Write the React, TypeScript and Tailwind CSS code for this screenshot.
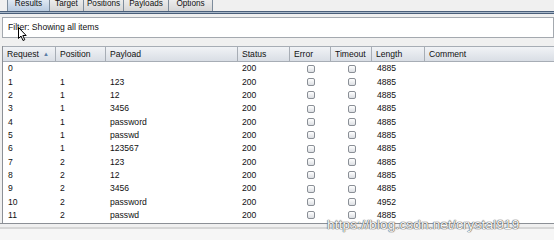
const tabs = ["Results", "Target", "Positions", "Payloads", "Options"];
const tabWidths = ["w-[43px]", "w-[35px]", "w-[41px]", "w-[46px]", "w-[45px]"];

const cols = [
  { name: "Request", w: "w-[53px]" },
  { name: "Position", w: "w-[50px]" },
  { name: "Payload", w: "w-[132px]" },
  { name: "Status", w: "w-[52px]" },
  { name: "Error", w: "w-[41px]" },
  { name: "Timeout", w: "w-[41px]" },
  { name: "Length", w: "w-[53px]" },
  { name: "Comment", w: "w-[131px]" },
];

const rows = [
  ["0", "", "", "200", "4885"],
  ["1", "1", "123", "200", "4885"],
  ["2", "1", "12", "200", "4885"],
  ["3", "1", "3456", "200", "4885"],
  ["4", "1", "password", "200", "4885"],
  ["5", "1", "passwd", "200", "4885"],
  ["6", "1", "123567", "200", "4885"],
  ["7", "2", "123", "200", "4885"],
  ["8", "2", "12", "200", "4885"],
  ["9", "2", "3456", "200", "4885"],
  ["10", "2", "password", "200", "4952"],
  ["11", "2", "passwd", "200", "4885"],
];

function Check() {
  return (
    <div className="w-[41px] flex justify-center">
      <div className="w-[8px] h-[8px] rounded-[2px] border border-[#8a8f96] bg-gradient-to-b from-[#ffffff] to-[#dcdfe3]" />
    </div>
  );
}

export default function App() {
  return (
    <div className="relative w-[554px] h-[240px] overflow-hidden bg-[#f0f0f0] text-[#111] font-['Liberation_Sans',Arial,sans-serif] text-[8.6px]">
      {/* Tabs */}
      <div className="flex h-[11px] pl-[7px] text-[8.2px]">
        {tabs.map((t, i) => (
          <div
            key={t}
            className={`${tabWidths[i]} shrink-0 h-[11px] flex items-center justify-center border-x border-[#7d8c9c] leading-none pb-[2px] -ml-px first:ml-0 ${
              i === 0
                ? "bg-gradient-to-b from-[#dfe8f2] to-[#b9cbe0]"
                : "bg-gradient-to-b from-[#ececec] to-[#d6d6d6]"
            }`}
          >
            {t}
          </div>
        ))}
      </div>
      <div className="h-[3px] border-t border-b border-[#4a5f7a] bg-[#a9b8c9]" />

      {/* Filter */}
      <div className="mt-[3px] ml-[2px] h-[21px] bg-white border border-[#a4a9af] flex items-center pl-[5px]">
        Filter: Showing all items
      </div>

      {/* Table */}
      <div className="mt-[8px] ml-[2px] border-l border-[#8c9096] bg-white">
        <div className="flex h-[16px] bg-gradient-to-b from-[#f1f3f6] to-[#d9dee5] border-y border-[#a7adb5]">
          {cols.map((c, i) => (
            <div
              key={c.name}
              className={`${c.w} shrink-0 flex items-center pl-[4px] border-r border-[#a7adb5] ${i === 0 ? "justify-between pr-[6px]" : ""}`}
            >
              <span>{c.name}</span>
              {i === 0 && <span className="text-[6px] text-[#5b7da6]">▲</span>}
            </div>
          ))}
        </div>
        {rows.map((r) => (
          <div key={r[0]} className="flex h-[13.35px] items-center">
            <div className="w-[53px] pl-[5px]">{r[0]}</div>
            <div className="w-[50px] pl-[4px]">{r[1]}</div>
            <div className="w-[132px] pl-[4px]">{r[2]}</div>
            <div className="w-[52px] pl-[4px]">{r[3]}</div>
            <Check />
            <Check />
            <div className="w-[53px] pl-[5px]">{r[4]}</div>
          </div>
        ))}
        <div className="h-[1px]" />
      </div>
      <div className="h-[2px] border-t border-[#8c9096]" />
      <div className="h-[2px] bg-[#d6d6d6] mt-[2px]" />
      <div className="h-[12px] bg-[#f6f6f6]" />

      {/* Watermark */}
      <div className="absolute left-[327px] top-[215px] text-[13.5px] tracking-[0.2px] text-[#f8f8f8] [text-shadow:0_0_1px_#555,0_0_1px_#555,0_0_1px_#777]">
        https://blog.csdn.net/crystal919
      </div>

      {/* Cursor */}
      <svg className="absolute left-[18px] top-[27px]" width="10" height="15" viewBox="0 0 10 15">
        <path d="M0.5 0.5 L0.5 11.5 L3 9 L5 13.5 L6.8 12.7 L4.8 8.5 L8.2 8.5 Z" fill="#fff" stroke="#000" strokeWidth="1" strokeLinejoin="round" />
      </svg>
    </div>
  );
}
